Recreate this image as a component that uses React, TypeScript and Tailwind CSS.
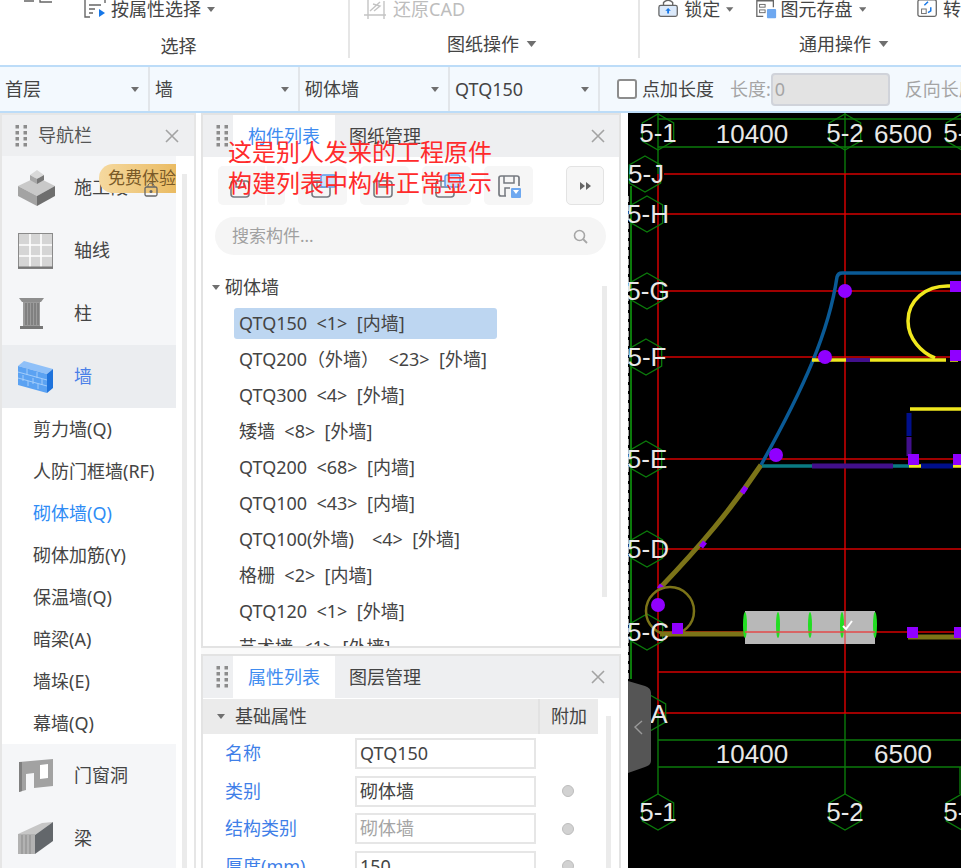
const font = { fontFamily: '"Noto Sans","Noto Sans CJK SC",sans-serif' }

function Caret({ className = "" }: { className?: string }) {
  return (
    <svg width="8" height="5" viewBox="0 0 8 5" className={className}>
      <path d="M0 0H8L4 5Z" fill="#6f6f6f" />
    </svg>
  )
}

function Grip() {
  return (
    <svg width="12" height="22" viewBox="0 0 12 22" className="shrink-0">
      {[2, 8, 14, 20].map(y => [2, 10].map(x => <rect key={`${x}-${y}`} x={x - 1.5} y={y - 2} width="3.5" height="3.5" fill="#8c8c8c" />))}
    </svg>
  )
}

function Close() {
  return (
    <svg width="14" height="14" viewBox="0 0 14 14" className="shrink-0">
      <path d="M1 1L13 13M13 1L1 13" stroke="#a3a3a3" strokeWidth="1.6" />
    </svg>
  )
}

function Ribbon() {
  return (
    <div className="h-[65px] flex bg-white text-[#444] text-[18px] shrink-0">
      <div className="w-[350px] h-[58px] border-r-2 border-[#e6e6e6] flex flex-col">
        <div className="h-[18px] flex items-center pl-[20px]">
          <svg width="36" height="18" viewBox="0 0 36 18" className="mr-[27px] self-start"><path d="M4 1H14M20 0V2H32" stroke="#666" strokeWidth="1.4" fill="none" /></svg>
          <svg width="24" height="20" viewBox="0 0 24 20" className="mr-[4px]">
            <path d="M8 0H2V18H7M19 0H22V4" stroke="#666" strokeWidth="1.4" fill="none" />
            <path d="M6 6H18M6 10H12M6 14H10" stroke="#666" strokeWidth="1.3" />
            <path d="M16 10L22 14L16 18Z" fill="#1677e8" />
          </svg>
          <span className="leading-none">按属性选择</span>
          <Caret className="ml-[6px]" />
        </div>
        <div className="mt-[19px] text-center leading-[18px] pl-[9px]">选择</div>
      </div>
      <div className="w-[290px] h-[58px] border-r-2 border-[#e6e6e6] flex flex-col">
        <div className="h-[18px] flex items-center pl-[14px] text-[#bdbdbd]">
          <svg width="24" height="20" viewBox="0 0 24 20" className="mr-[5px]">
            <path d="M0 16H22M4 0V20M20 2V20M6 12L16 3M9 5L16 7L10 12" stroke="#c4c4c4" strokeWidth="1.4" fill="none" />
          </svg>
          <span className="leading-none">还原CAD</span>
        </div>
        <div className="mt-[17px] flex items-center justify-center gap-[7px] leading-[18px] pr-[4px]">图纸操作<Caret className="w-[11px] h-[6px]" /></div>
      </div>
      <div className="flex-1 h-[58px] flex flex-col overflow-hidden">
        <div className="h-[18px] flex items-center pl-[18px] whitespace-nowrap">
          <svg width="22" height="20" viewBox="0 0 22 20" className="mr-[6px]">
            <path d="M6 6V3Q11 -2 16 3V6" stroke="#666" strokeWidth="1.5" fill="none" />
            <rect x="1" y="6" width="20" height="12" rx="2" fill="#dbe9fa" stroke="#666" strokeWidth="1.4" />
            <path d="M11 9L14 12H12V15H10V12H8Z" fill="#1677e8" />
          </svg>
          <span className="leading-none">锁定</span>
          <Caret className="ml-[6px]" />
          <svg width="24" height="20" viewBox="0 0 24 20" className="ml-[21px] mr-[4px]">
            <path d="M9 18H2V1H20V8" stroke="#666" strokeWidth="1.4" fill="none" />
            <rect x="5" y="5" width="6" height="3" fill="none" stroke="#666" />
            <rect x="5" y="11" width="6" height="3" fill="none" stroke="#666" />
            <rect x="13" y="10" width="10" height="10" rx="1" fill="#6ea8f0" />
          </svg>
          <span className="leading-none">图元存盘</span>
          <Caret className="ml-[6px]" />
          <svg width="24" height="22" viewBox="0 0 24 22" className="ml-[51px] mr-[4px]">
            <rect x="1" y="1" width="20" height="18" rx="2" fill="none" stroke="#666" strokeWidth="1.4" />
            <rect x="5" y="11" width="5" height="5" fill="none" stroke="#666" />
            <path d="M8 7L12 3M15 9V13L12 15" stroke="#1677e8" strokeWidth="1.6" fill="none" />
          </svg>
          <span className="leading-none">转</span>
        </div>
        <div className="mt-[17px] flex items-center justify-center gap-[7px] leading-[18px] pr-[2px] w-[410px]">通用操作<Caret className="w-[11px] h-[6px]" /></div>
      </div>
    </div>
  )
}

function SelectCell({ label }: { label: string }) {
  return (
    <div className="w-[150px] shrink-0 border-r-2 border-[#e2e6ea] flex items-center pl-[5px] pr-[9px] justify-between">
      <span>{label}</span>
      <Caret />
    </div>
  )
}

function SelectorBar() {
  return (
    <div className="h-[48px] shrink-0 bg-[#f3f9fe] border-y-2 border-[#bcdcf8] flex text-[18px] text-[#444] overflow-hidden whitespace-nowrap">
      <SelectCell label="首层" />
      <SelectCell label="墙" />
      <SelectCell label="砌体墙" />
      <SelectCell label="QTQ150" />
      <div className="flex items-center pl-[17px] shrink-0">
        <div className="size-[20px] rounded-[3px] border-2 border-[#8d8d8d] bg-white mr-[5px]" />
        <span>点加长度</span>
        <span className="ml-[16px] text-[#a5a5a5]">长度:</span>
        <div className="w-[119px] h-[33px] bg-[#e3e3e3] border-2 border-[#d0d3da] rounded-[4px] text-[#a5a5a5] pl-[2px] leading-[29px]">0</div>
        <span className="ml-[15px] text-[#a5a5a5]">反向长度</span>
      </div>
    </div>
  )
}

function PedestalIcon() {
  return (
    <svg width="38" height="38" viewBox="0 0 38 38">
      <path d="M0 17L19 8L37 17L19 27Z" fill="#c9c9c9" />
      <path d="M0 17L19 27V37L0 27Z" fill="#a3a3a3" />
      <path d="M37 17L19 27V37L37 27Z" fill="#6e6e6e" />
      <path d="M12 6L19 1L26 6L19 10Z" fill="#d9d9d9" />
      <path d="M12 6L19 10V15L12 11Z" fill="#a8a8a8" />
      <path d="M26 6L19 10V15L26 11Z" fill="#777" />
    </svg>
  )
}

function GridIcon() {
  return (
    <svg width="36" height="36" viewBox="0 0 36 36">
      <rect x="0.5" y="0.5" width="34" height="35" fill="#d5d5d5" stroke="#8a8a8a" />
      <path d="M12 1V35M23 1V35M1 12H34M1 23H34" stroke="#fff" strokeWidth="1.6" />
      <path d="M0 34.5H35" stroke="#777" strokeWidth="2" />
    </svg>
  )
}

function ColumnIcon() {
  return (
    <svg width="28" height="34" viewBox="0 0 28 34">
      <path d="M1 1H26L23 5H4Z" fill="#8e8e8e" />
      <rect x="5" y="5" width="17" height="24" fill="#9b9b9b" />
      <path d="M8 6V28M11 6V28M14 6V28M17 6V28M20 6V28" stroke="#666" />
      <rect x="2" y="29" width="23" height="3" fill="#777" />
    </svg>
  )
}

function WallIcon() {
  return (
    <svg width="36" height="32" viewBox="0 0 36 32">
      <path d="M0 5L6 0L35 8L29 13Z" fill="#8fc0f8" />
      <path d="M0 5L29 13V32L0 24Z" fill="#5ba2f2" />
      <path d="M29 13L35 8V27L29 32Z" fill="#1f73dc" />
      <path d="M0 11L29 19M0 17L29 25M9 8V14M19 11V17M5 14V20M15 17V23M24 18V24M10 20V25M20 23V28" stroke="#a9d0fa" strokeWidth="0.9" />
    </svg>
  )
}

function DoorIcon() {
  return (
    <svg width="36" height="34" viewBox="0 0 36 34">
      <path d="M1 3L35 0V27L16 29V14L8 15V31L1 33Z" fill="#a2a2a2" />
      <path d="M1 3L4 3V32L1 33Z" fill="#808080" />
      <path d="M22 6L30 5V19L22 20Z" fill="#fff" />
    </svg>
  )
}

function BeamIcon() {
  return (
    <svg width="36" height="33" viewBox="0 0 36 33">
      <path d="M0 12L24 1L35 0L17 13Z" fill="#c6c6c6" />
      <path d="M0 12H17V32H0Z" fill="#b2b2b2" />
      <path d="M4 13V32M8 13V32M12 13V32" stroke="#8a8a8a" />
      <path d="M17 13L35 0V19L17 32Z" fill="#63676b" />
    </svg>
  )
}

function NavRow({ icon, label, active }: { icon: React.ReactNode; label: string; active?: boolean }) {
  return (
    <div className={`h-[63px] flex items-center ${active ? "bg-[#ebedf0] text-[#4a80e8]" : "text-[#444]"}`}>
      <div className="w-[72px] pl-[16px] flex items-center shrink-0">{icon}</div>
      <span>{label}</span>
    </div>
  )
}

const wallTypes = ["剪力墙(Q)", "人防门框墙(RF)", "砌体墙(Q)", "砌体加筋(Y)", "保温墙(Q)", "暗梁(A)", "墙垛(E)", "幕墙(Q)"]

function NavPanel() {
  return (
    <div className="w-[196px] shrink-0 h-full bg-white border-x-2 border-t-2 border-[#e6e6e6] flex flex-col relative overflow-hidden text-[18px]">
      <div className="h-[41px] bg-[#eeeff1] flex items-center shrink-0 pl-[13px] pr-[15px] text-[#555]">
        <Grip />
        <span className="ml-[11px] flex-1">导航栏</span>
        <Close />
      </div>
      <div className="flex flex-1 min-h-0">
        <div className="w-[174px] bg-[#f5f6f8]">
          <NavRow icon={<PedestalIcon />} label="施工段" />
          <NavRow icon={<GridIcon />} label="轴线" />
          <NavRow icon={<ColumnIcon />} label="柱" />
          <NavRow icon={<WallIcon />} label="墙" active />
          <div className="bg-white h-[336px]">
            {wallTypes.map(t => (
              <div key={t} className={`h-[42px] pl-[31px] flex items-center whitespace-nowrap ${t === "砌体墙(Q)" ? "text-[#2f8cf5]" : "text-[#444]"}`}>{t}</div>
            ))}
          </div>
          <NavRow icon={<DoorIcon />} label="门窗洞" />
          <NavRow icon={<BeamIcon />} label="梁" />
        </div>
        <div className="w-[5px] ml-[6px] mt-[18px] bg-[#ebebeb]" />
      </div>
      <div className="absolute left-[97px] top-[49px] w-[77px] h-[29px] rounded-l-[14px] bg-gradient-to-r from-[#f5d99f] to-[#eabb62] text-[#7a5a28] text-[17px] leading-[28px] pl-[9px] whitespace-nowrap overflow-hidden">免费体验</div>
      <svg width="14" height="16" viewBox="0 0 14 16" className="absolute left-[142px] top-[66px]">
        <path d="M4 6V4Q7 0 10 4V6" stroke="#666" fill="none" />
        <rect x="1" y="6" width="12" height="9" rx="1.5" fill="none" stroke="#666" strokeWidth="1.3" />
        <circle cx="7" cy="10.5" r="1.5" fill="#666" />
      </svg>
    </div>
  )
}

function PanelTabs({ first, second }: { first: string; second: string }) {
  return (
    <div className="h-[42px] bg-[#eeeff1] flex items-center shrink-0 pl-[13px] pr-[14px]">
      <Grip />
      <div className="ml-[5px] w-[102px] h-full bg-white text-[#3f8cf0] flex items-center justify-center">{first}</div>
      <div className="w-[102px] text-center text-[#444] -ml-[1px]">{second}</div>
      <div className="flex-1" />
      <Close />
    </div>
  )
}

function OutlineIcon({ accent }: { accent?: boolean }) {
  return (
    <svg width="28" height="26" viewBox="0 0 28 26" className="shrink-0">
      <rect x="3" y="8" width="18" height="16" rx="3" fill="none" stroke="#767a80" strokeWidth="1.6" />
      <path d="M8 8V14H16V8" stroke="#767a80" strokeWidth="1.4" fill="none" />
      {accent && <rect x="12" y="2" width="15" height="12" rx="2" fill="#cfe3fb" stroke="#5c9bec" strokeWidth="1.5" />}
    </svg>
  )
}

function SaveIcon() {
  return (
    <svg width="24" height="24" viewBox="0 0 24 24" className="shrink-0">
      <path d="M9 22H4Q2 22 2 20V4Q2 2 4 2H20Q22 2 22 4V12" stroke="#767a80" strokeWidth="1.7" fill="none" />
      <path d="M7 2V9H17V2M8 22V14H13" stroke="#767a80" strokeWidth="1.5" fill="none" />
      <rect x="14" y="14" width="10" height="10" rx="1" fill="#6ea8f0" />
      <path d="M16 16H22L19 20Z" fill="#fff" />
    </svg>
  )
}

function ToolButton({ children }: { children: React.ReactNode }) {
  return <div className="w-[49px] h-[39px] rounded-[5px] bg-[#f6f6f6] flex items-center justify-center">{children}</div>
}

const components = ["QTQ150  <1>  [内墙]", "QTQ200（外墙）  <23>  [外墙]", "QTQ300  <4>  [外墙]", "矮墙  <8>  [外墙]", "QTQ200  <68>  [内墙]", "QTQ100  <43>  [内墙]", "QTQ100(外墙)　<4>  [外墙]", "格栅  <2>  [内墙]", "QTQ120  <1>  [外墙]", "艺术墙  <1>  [外墙]"]

function ComponentPanel() {
  return (
    <div className="h-[535px] shrink-0 bg-white border-x-2 border-y-2 border-[#e3e3e3] flex flex-col overflow-hidden relative">
      <PanelTabs first="构件列表" second="图纸管理" />
      <div className="flex gap-[13px] pl-[15px] pr-[15px] mt-[9px] shrink-0">
        <div className="w-[67px] h-[39px] flex gap-[2px]">
          <div className="w-[47px] h-full rounded-l-[5px] bg-[#f6f6f6] flex items-center justify-center"><OutlineIcon /></div>
          <div className="flex-1 h-full rounded-r-[5px] bg-[#f6f6f6]" />
        </div>
        <ToolButton><OutlineIcon accent /></ToolButton>
        <ToolButton><OutlineIcon /></ToolButton>
        <ToolButton><OutlineIcon accent /></ToolButton>
        <ToolButton><SaveIcon /></ToolButton>
        <div className="flex-1" />
        <div className="w-[38px] h-[39px] rounded-[5px] bg-[#f6f6f6] border border-[#e3e3e3] flex items-center justify-center">
          <svg width="11" height="8" viewBox="0 0 11 8"><path d="M0 0L5 4L0 8ZM6 0L11 4L6 8Z" fill="#666" /></svg>
        </div>
      </div>
      <div className="ml-[12px] mr-[13px] mt-[12px] h-[38px] rounded-[19px] bg-[#f5f5f5] flex items-center justify-between pl-[17px] pr-[18px] shrink-0 text-[#a0a0a0] text-[17px]">
        <span>搜索构件...</span>
        <svg width="15" height="15" viewBox="0 0 15 15"><circle cx="6.5" cy="6.5" r="5" fill="none" stroke="#a6a6a6" strokeWidth="1.6" /><path d="M10 10L14 14" stroke="#a6a6a6" strokeWidth="1.8" /></svg>
      </div>
      <div className="mt-[17px] pl-[9px] flex items-center gap-[5px] h-[30px] shrink-0 text-[#444]">
        <Caret />
        <span>砌体墙</span>
      </div>
      <div className="pl-[31px] text-[#444] mt-[3px]">
        {components.map((c, i) => (
          <div key={c} className="h-[36px] flex items-center">
            <div className={`w-[263px] h-[31px] flex items-center pl-[5px] rounded-[3px] whitespace-pre ${i === 0 ? "bg-[#bdd6f1]" : ""}`}>{c}</div>
          </div>
        ))}
      </div>
      <div className="absolute right-[12px] top-[171px] w-[5px] h-[311px] bg-[#ebebeb]" />
    </div>
  )
}

const props = [
  { name: "名称", value: "QTQ150" },
  { name: "类别", value: "砌体墙", radio: true },
  { name: "结构类别", value: "砌体墙", radio: true, muted: true },
  { name: "厚度(mm)", value: "150", radio: true },
]

function PropertyPanel() {
  return (
    <div className="flex-1 min-h-0 bg-white border-x-2 border-t-2 border-[#e3e3e3] flex flex-col overflow-hidden relative mt-[6px]">
      <PanelTabs first="属性列表" second="图层管理" />
      <div className="h-[35px] w-[395px] bg-[#ebebeb] flex items-center shrink-0 mt-[1px]">
        <Caret className="ml-[14px]" />
        <span className="ml-[10px] flex-1 text-[#444]">基础属性</span>
        <span className="w-[60px] border-l-2 border-[#e2e2e2] h-full flex items-center justify-center text-[#444]">附加</span>
      </div>
      <div className="mt-[1px]">
        {props.map(p => (
          <div key={p.name} className="h-[37.5px] flex items-center">
            <span className="w-[152px] pl-[22px] text-[#3f7fe8] whitespace-nowrap">{p.name}</span>
            <div className={`w-[181px] h-[31px] border-2 border-[#e6e6e6] pl-[3px] leading-[27px] ${p.muted ? "text-[#a5a5a5]" : "text-[#444]"}`}>{p.value}</div>
            {p.radio && <div className="ml-[26px] size-[12px] rounded-full bg-[#d2d2d2] border border-[#bdbdbd]" />}
          </div>
        ))}
      </div>
      <div className="absolute right-[8px] top-[60px] w-[5px] h-[160px] bg-[#ebebeb]" />
    </div>
  )
}

function Hex({ x, y, r = 18 }: { x: number; y: number; r?: number }) {
  const pts = [[0, -r], [r * 0.87, -r / 2], [r * 0.87, r / 2], [0, r], [-r * 0.87, r / 2], [-r * 0.87, -r / 2]].map(p => `${x + p[0]},${y + p[1]}`).join(" ")
  return <polygon points={pts} fill="none" stroke="#0b7a0b" strokeWidth="1.3" />
}

function CadText({ x, y, size = 26, children }: { x: number; y: number; size?: number; children: string }) {
  return <text x={x} y={y} fontSize={size} textAnchor="middle" fill="#e8e8e8" fontFamily='"Liberation Sans",sans-serif'>{children}</text>
}

function CadCanvas() {
  const rows: [string, number, number][] = [["5-J", 173, 645], ["5-H", 213, 647], ["5-G", 290, 647], ["5-F", 356, 646], ["5-E", 458, 646], ["5-D", 548, 647], ["5-C", 631, 647]]
  const squares = [[950, 280], [950, 349], [908, 453], [953, 453], [672, 622], [907, 626], [954, 626]]
  const dots = [[845, 290], [825, 356], [776, 454], [658, 604]]
  return (
    <div className="flex-1 h-full bg-black overflow-hidden relative">
      <svg viewBox="628 112 333 756" width="333" height="756" className="block">
        <path d="M631 185V678" stroke="#0b7a0b" strokeWidth="2" />
        <path d="M628 195V680" stroke="#ddd" strokeWidth="1.5" strokeDasharray="6 3" />
        <path d="M658 118H961M658 146H961M658 739H961M658 766H961" stroke="#0b7a0b" strokeWidth="1.4" />
        <path d="M658 112V173M845 112V173M658 712V793M845 712V793M960 766V793" stroke="#0b7a0b" strokeWidth="1.4" />
        {[173, 213, 290, 356, 458, 548, 631, 671, 712].map(y => <path key={y} d={`M${y === 173 || y === 213 ? 664 : 658} ${y}H961`} stroke="#d40000" strokeWidth="1.3" />)}
        <path d="M658 173V712M845 173V712" stroke="#e00000" strokeWidth="1.4" />

        {rows.map(r => <Hex key={r[0]} x={r[2]} y={r[1]} />)}
        <Hex x={650} y={712} />
        {[658, 845, 962].map(x => <Hex key={x} x={x} y={131} />)}
        {[658, 845, 962].map(x => <Hex key={`b${x}`} x={x} y={811} />)}

        <path d="M961 272H842Q838 272 837 276C829 330 805 385 761 464" fill="none" stroke="#0a5a96" strokeWidth="3.5" />
        <path d="M761 464C730 510 700 545 660 587" fill="none" stroke="#7c7418" strokeWidth="5" />
        <path d="M746 486L742 492M705 541L701 546M662 584L659 588" stroke="#9000ff" strokeWidth="5" />
        <circle cx="670" cy="610" r="24" fill="none" stroke="#7c7418" strokeWidth="2.5" />
        <path d="M660 633H745M908 636H961" stroke="#7c7418" strokeWidth="5" />

        <path d="M812 359H846" stroke="#f0e81e" strokeWidth="3.5" />
        <path d="M846 359H870" stroke="#42108c" strokeWidth="4" />
        <path d="M870 359H946M950 359H958" stroke="#f0e81e" strokeWidth="3.5" />
        <path d="M950 285C925 284 908 300 908 320C908 338 922 352 935 357" fill="none" stroke="#f0e81e" strokeWidth="3.5" />
        <path d="M910 408H961" stroke="#f0e81e" strokeWidth="3.5" />
        <path d="M909 412V435" stroke="#000f8c" strokeWidth="5" />
        <path d="M909 436V455" stroke="#42108c" strokeWidth="5" />
        <path d="M762 465H812M893 465H909" stroke="#0a7a82" strokeWidth="3.5" />
        <path d="M812 465H893" stroke="#42108c" strokeWidth="5" />
        <path d="M909 465H921M953 465H961" stroke="#f0e81e" strokeWidth="3.5" />
        <path d="M921 465H953" stroke="#000f8c" strokeWidth="5" />

        <rect x="745" y="610" width="130" height="33" fill="#b8b8b8" />
        {[745, 778, 810, 842, 875].map(x => <ellipse key={x} cx={x} cy="624" rx="2" ry="13" fill="#22dd22" />)}
        <path d="M745 631H875" stroke="#e34a4a" strokeWidth="1.3" />
        <path d="M845 610V643" stroke="#e34a4a" strokeWidth="1.3" />
        <path d="M843 625L846 628L852 620" fill="none" stroke="#fff" strokeWidth="2" />

        {squares.map(s => <rect key={s[0] * 1000 + s[1]} x={s[0]} y={s[1]} width="11" height="11" fill="#9000ff" />)}
        {dots.map(d => <circle key={d[0]} cx={d[0]} cy={d[1]} r="7" fill="#9000ff" />)}

        {rows.map(r => <CadText key={r[0]} x={r[2] + 1} y={r[1] + 9}>{r[0]}</CadText>)}
        <CadText x={658} y={141}>5-1</CadText>
        <CadText x={752} y={142}>10400</CadText>
        <CadText x={845} y={141}>5-2</CadText>
        <CadText x={903} y={142}>6500</CadText>
        <CadText x={962} y={141}>5-3</CadText>
        <CadText x={659} y={722}>A</CadText>
        <CadText x={752} y={762}>10400</CadText>
        <CadText x={903} y={762}>6500</CadText>
        <CadText x={658} y={820}>5-1</CadText>
        <CadText x={845} y={820}>5-2</CadText>
        <CadText x={962} y={820}>5-3</CadText>

        <path d="M628 680L645 685Q651 687 651 692V760Q651 764 645 766L628 772Z" fill="#555" />
        <path d="M642 720L635 726L642 733" fill="none" stroke="#9a9a9a" strokeWidth="1.4" />
      </svg>
    </div>
  )
}

export default function App() {
  return (
    <div className="w-[961px] h-[868px] overflow-hidden flex flex-col bg-[#fafafa] relative" style={font}>
      <Ribbon />
      <SelectorBar />
      <div className="flex-1 min-h-0 flex text-[18px]">
        <NavPanel />
        <div className="w-[5px] bg-white shrink-0" />
        <div className="w-[420px] shrink-0 h-full flex flex-col">
          <ComponentPanel />
          <PropertyPanel />
        </div>
        <div className="w-[7px] bg-white shrink-0" />
        <CadCanvas />
      </div>
      <div className="absolute left-[228px] top-[136px] text-[#ff2b2b] text-[24px] leading-[31px] whitespace-nowrap">
        <div>这是别人发来的工程原件</div>
        <div>构建列表中构件正常显示</div>
      </div>
    </div>
  )
}
